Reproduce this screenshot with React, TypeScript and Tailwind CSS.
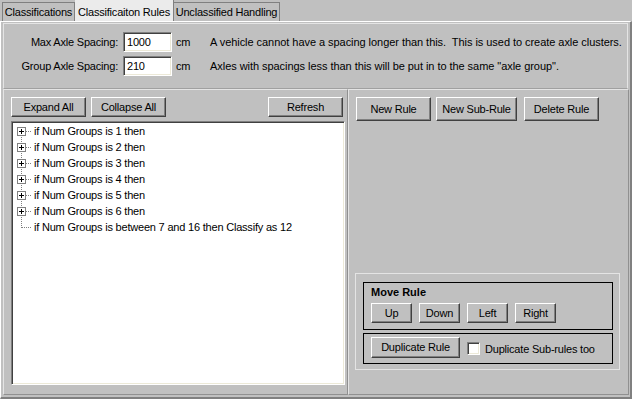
import { ReactNode } from 'react';
import clsx from 'clsx';

const rules = [
  'if Num Groups is 1 then',
  'if Num Groups is 2 then',
  'if Num Groups is 3 then',
  'if Num Groups is 4 then',
  'if Num Groups is 5 then',
  'if Num Groups is 6 then',
  'if Num Groups is between 7 and 16 then Classify as 12',
];

function Btn({ children, className }: { children: ReactNode; className?: string }) {
  return (
    <button
      className={clsx(
        'flex shrink-0 items-center justify-center bg-[#c0c0c0] border border-t-white border-l-white border-r-[#404040] border-b-[#404040] shadow-[inset_-1px_-1px_0_#808080]',
        className
      )}
    >
      {children}
    </button>
  );
}

function Field({ value }: { value: string }) {
  return (
    <div className="ml-[5px] w-[49px] h-[20px] flex items-center pl-[3px] bg-white border border-t-[#808080] border-l-[#808080] border-b-white border-r-white shadow-[inset_1px_1px_0_#404040,inset_-1px_-1px_0_#ece9d8]">
      {value}
    </div>
  );
}

function TreeRow({ text, index, last }: { text: string; index: number; last: boolean }) {
  return (
    <div className="flex items-center h-[16px]">
      <svg width="20" height="16" className="shrink-0" shapeRendering="crispEdges">
        <line x1="7.5" y1={index === 0 ? 8 : 0} x2="7.5" y2={last ? 9 : 16} stroke="#808080" strokeDasharray="1 1" />
        <line x1={last ? 8 : 12} y1="8.5" x2="18" y2="8.5" stroke="#808080" strokeDasharray="1 1" />
        {!last && (
          <>
            <rect x="3.5" y="4.5" width="8" height="8" fill="white" stroke="#808080" />
            <path d="M5 8.5h5M7.5 6v5" stroke="black" />
          </>
        )}
      </svg>
      <span className="whitespace-nowrap">{text}</span>
    </div>
  );
}

export default function App() {
  return (
    <div className="w-[632px] h-[399px] bg-[#c0c0c0] overflow-hidden font-['Liberation_Sans',Arial,sans-serif] text-[11px] tracking-[-0.2px] leading-none text-black select-none">
      {/* tabs */}
      <div className="flex items-end h-[21px] pl-[2px]">
        <div className="h-[19px] w-[73px] border border-b-0 border-[#808080] flex items-center justify-center">Classifications</div>
        <div className="h-[21px] w-[99px] bg-[#ebebeb] border-r border-[#808080] flex items-center justify-center pt-[3px]">Classificaiton Rules</div>
        <div className="h-[19px] w-[106px] border border-l-0 border-b-0 border-[#808080] flex items-center justify-center">Unclassified Handling</div>
      </div>

      {/* tab page */}
      <div className="h-[378px] flex flex-col border-t border-l border-white border-r-2 border-b-2 border-r-[#808080] border-b-[#808080] pl-[2px] pt-px">
        {/* spacing settings */}
        <div className="h-[66px] mr-[2px] flex flex-col gap-[4px] pt-[8px] border border-[#e4e4e4] border-b-[#a0a0a0]">
          <div className="flex items-center h-[20px]">
            <span className="w-[114px] text-right">Max Axle Spacing:</span>
            <Field value="1000" />
            <span className="ml-[4px] w-[34px]">cm</span>
            <span className="whitespace-pre tracking-[-0.05px]">A vehicle cannot have a spacing longer than this.  This is used to create axle clusters.</span>
          </div>
          <div className="flex items-center h-[20px]">
            <span className="w-[114px] text-right">Group Axle Spacing:</span>
            <Field value="210" />
            <span className="ml-[4px] w-[34px]">cm</span>
            <span className="whitespace-pre tracking-[-0.05px]">Axles with spacings less than this will be put in to the same "axle group".</span>
          </div>
        </div>

        <div className="flex flex-1 pb-[2px]">
          {/* rule tree */}
          <div className="w-[345px] flex flex-col pl-[7px] pr-[2px] pt-[7px] pb-[9px] border border-t-[#e4e4e4] border-l-[#e4e4e4] border-r-[#909090] border-b-[#909090]">
            <div className="flex gap-[5px] pr-[2px]">
              <Btn className="w-[75px] h-[20px]">Expand All</Btn>
              <Btn className="w-[75px] h-[20px]">Collapse All</Btn>
              <Btn className="w-[75px] h-[20px] ml-auto">Refresh</Btn>
            </div>
            <div className="flex-1 mt-[4px] bg-white border border-t-[#808080] border-l-[#808080] border-b-white border-r-white shadow-[inset_1px_1px_0_#404040,inset_-1px_-1px_0_#ece9d8] pt-[1px] pl-[2px]">
              {rules.map((r, i) => (
                <TreeRow key={i} text={r} index={i} last={i === rules.length - 1} />
              ))}
            </div>
          </div>

          {/* rule actions */}
          <div className="flex-1 flex flex-col pl-[7px] pt-[7px] pb-[24px] border border-t-[#e4e4e4] border-l-[#e4e4e4] border-r-[#909090] border-b-[#909090] mr-px">
            <div className="flex">
              <Btn className="w-[75px] h-[24px]">New Rule</Btn>
              <Btn className="w-[81px] h-[24px] ml-[5px]">New Sub-Rule</Btn>
              <Btn className="w-[75px] h-[24px] ml-[7px]">Delete Rule</Btn>
            </div>
            <div className="mt-auto -ml-px w-[265px] h-[97px] border border-[#e4e4e4] pl-[7px] pt-[8px]">
              <div className="w-[250px] h-[48px] border border-black pl-[7px] pt-[4px]">
                <div className="h-[12px] font-bold tracking-normal">Move Rule</div>
                <div className="flex gap-[7px] mt-[4px]">
                  <Btn className="w-[41px] h-[20px]">Up</Btn>
                  <Btn className="w-[41px] h-[20px]">Down</Btn>
                  <Btn className="w-[41px] h-[20px]">Left</Btn>
                  <Btn className="w-[41px] h-[20px]">Right</Btn>
                </div>
              </div>
              <div className="w-[250px] h-[31px] mt-[3px] border border-black pl-[7px] pt-[3px] flex items-start">
                <Btn className="w-[89px] h-[21px]">Duplicate Rule</Btn>
                <div className="ml-[7px] mt-[5px] w-[13px] h-[13px] bg-white border border-t-[#808080] border-l-[#808080] border-b-white border-r-white shadow-[inset_1px_1px_0_#404040,inset_-1px_-1px_0_#ece9d8]" />
                <span className="ml-[5px] mt-[7px]">Duplicate Sub-rules too</span>
              </div>
            </div>
          </div>
        </div>
      </div>
    </div>
  );
}
